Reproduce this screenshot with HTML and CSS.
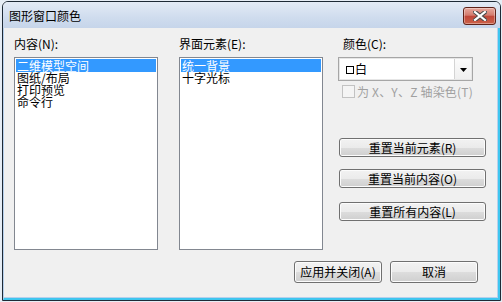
FILE: index.html
```html
<!DOCTYPE html>
<html lang="zh-CN">
<head>
<meta charset="utf-8">
<title>图形窗口颜色</title>
<link rel="stylesheet" href="styles.css">
</head>
<body>
<div class="window">
  <div class="titlebar">
    <span class="title">图形窗口颜色</span>
    <button class="close" aria-label="关闭">
      <svg width="14" height="10" viewBox="0 0 14 10">
        <path d="M2 1 L12 9 M12 1 L2 9" stroke="#4a4a4a" stroke-width="4.2" stroke-linecap="square" fill="none"/>
        <path d="M2 1 L12 9 M12 1 L2 9" stroke="#ffffff" stroke-width="2.2" stroke-linecap="square" fill="none"/>
      </svg>
    </button>
  </div>
  <div class="client">
    <div class="main">
      <div class="col">
        <div class="label">内容(N):</div>
        <ul class="listbox">
          <li class="sel">二维模型空间</li>
          <li>图纸/布局</li>
          <li>打印预览</li>
          <li>命令行</li>
        </ul>
      </div>
      <div class="col">
        <div class="label">界面元素(E):</div>
        <ul class="listbox">
          <li class="sel">统一背景</li>
          <li>十字光标</li>
        </ul>
      </div>
      <div class="col side">
        <div class="label indent">颜色(C):</div>
        <div class="combo">
          <span class="swatch"></span><span class="combo-text">白</span>
          <span class="drop"><svg width="7" height="4" viewBox="0 0 7 4"><path d="M0 0 H7 L3.5 4 Z" fill="#000"/></svg></span>
        </div>
        <div class="check">
          <span class="box"></span><span class="check-text">为 X、Y、Z 轴染色(T)</span>
        </div>
        <div class="btns">
          <button class="btn wide b1">重置当前元素(R)</button>
          <button class="btn wide b2">重置当前内容(O)</button>
          <button class="btn wide b3">重置所有内容(L)</button>
        </div>
      </div>
    </div>
    <div class="footer">
      <button class="btn foot">应用并关闭(A)</button>
      <button class="btn foot">取消</button>
    </div>
  </div>
</div>
</body>
</html>
```
FILE: styles.css
```css
* { box-sizing: border-box; }
html, body { margin: 0; padding: 0; }
body {
  width: 502px;
  height: 302px;
  background: #e6edf5;
  font-family: "Noto Sans CJK SC", "Liberation Sans", sans-serif;
  font-size: 12px;
  color: #000;
  overflow: hidden;
}
.window {
  margin: 1px 1px 0 2px;
  width: 499px;
  height: 300px;
  border: 1px solid #1e2a36;
  border-radius: 6px 6px 0 0;
  display: flex;
  flex-direction: column;
  background: #f0f0f0;
  overflow: hidden;
}
.titlebar {
  position: relative;
  height: 26px;
  flex: none;
  background: linear-gradient(#e3ebf6, #cfdcee 60%, #c6d5ea);
  display: flex;
  align-items: center;
  padding-left: 6px;
}
.title {
  line-height: 12px;
  padding-top: 2px;
}
.close {
  position: absolute;
  right: 4px;
  top: 5px;
  width: 33px;
  height: 18px;
  padding: 0;
  border: 1px solid #5e2219;
  border-radius: 3px;
  background: linear-gradient(#e7a99e, #d47b6e 45%, #c1473a 52%, #cb6248);
  box-shadow: inset 0 0 0 1px rgba(255,255,255,0.35);
  display: flex;
  align-items: center;
  justify-content: center;
}
.close svg { display: block; }
.client {
  flex: 1;
  border-style: solid;
  border-width: 0 2px 2px 1px;
  border-color: #3ec6ef;
  border-left-color: #b7d0ec;
  box-shadow: inset -1px -1px 0 #b7d0ec;
  padding: 9px 0 0 10px;
  display: flex;
  flex-direction: column;
}
.main {
  display: flex;
  gap: 21px;
  height: 213px;
}
.col {
  width: 144px;
  display: flex;
  flex-direction: column;
}
.col.side {
  width: 148px;
  margin-left: -6px;
}
.label {
  height: 13px;
  line-height: 13px;
  margin-bottom: 7px;
  white-space: nowrap;
}
.label.indent { padding-left: 5px; }
.listbox {
  list-style: none;
  margin: 0;
  padding: 1px;
  height: 193px;
  background: #fff;
  border: 1px solid #828790;
}
.listbox li {
  height: 12px;
  line-height: 12px;
  padding-left: 1px;
  white-space: nowrap;
}
.listbox li.sel {
  background: #3399ff;
  color: #fff;
  height: 13px;
  line-height: 13px;
}
.combo {
  width: 135px;
  height: 24px;
  border: 1px solid #a6a6a6;
  background: #fff;
  display: flex;
  align-items: center;
  padding-left: 7px;
  position: relative;
  box-shadow: inset 0 0 0 1px #e6e6e6;
}
.swatch {
  width: 8px;
  height: 8px;
  border: 1px solid #000;
  background: #fff;
  margin-right: 1px;
  margin-top: 2px;
}
.combo-text { line-height: 12px; }
.drop {
  margin-left: auto;
  width: 17px;
  height: 20px;
  margin-right: 1px;
  border-left: 1px solid #d4d4d4;
  background: linear-gradient(#fbfbfb, #f0f0f0);
  display: flex;
  align-items: center;
  justify-content: center;
  padding-top: 2px;
}
.drop svg { display: block; }
.check {
  display: flex;
  align-items: center;
  margin-top: 4px;
  padding-left: 4px;
  height: 13px;
  color: #a0a0a0;
}
.box {
  width: 13px;
  height: 13px;
  border: 1px solid #c2c2c2;
  background: #f4f4f4;
  margin-right: 2px;
}
.check-text {
  white-space: nowrap;
  line-height: 12px;
  letter-spacing: 0.2px;
}
.btns {
  display: flex;
  flex-direction: column;
}
.btn {
  font-family: "Noto Sans CJK SC", "Liberation Sans", sans-serif;
  font-size: 12px;
  color: #000;
  padding: 0;
  border: 1px solid #707070;
  border-radius: 3px;
  background: linear-gradient(#f2f2f2, #ebebeb 50%, #dddddd 51%, #cfcfcf);
  box-shadow: inset 0 0 0 1px #fcfcfc;
  line-height: 12px;
  white-space: nowrap;
}
.btn.wide {
  width: 147px;
  height: 19px;
  margin-left: 1px;
}
.b1 { margin-top: 40px; }
.b2 { margin-top: 12px; }
.b3 { margin-top: 14px; }
.footer {
  display: flex;
  justify-content: flex-end;
  gap: 8px;
  margin-top: 11px;
  padding-right: 20px;
}
.btn.foot {
  width: 88px;
  height: 22px;
}
```
